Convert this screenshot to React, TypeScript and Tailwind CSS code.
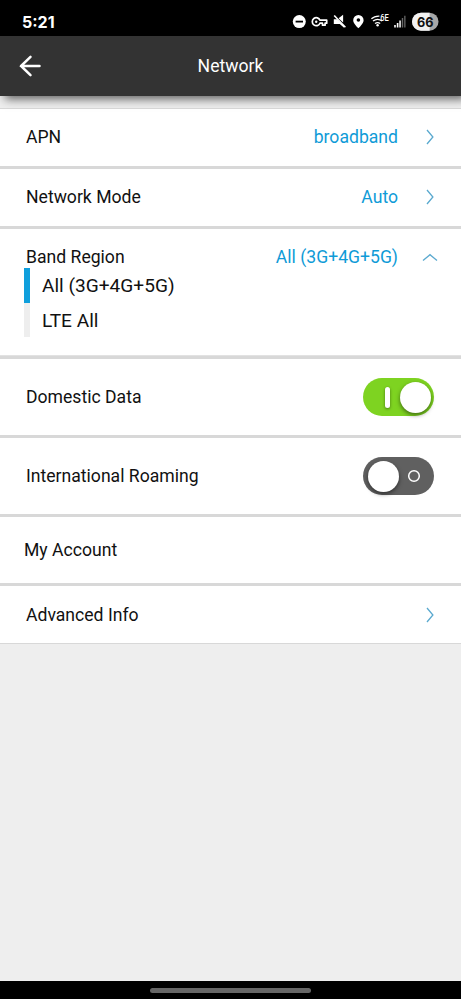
import type { ReactNode } from "react";

function Chevron({ up = false }: { up?: boolean }) {
  return (
    <svg width="16" height="16" viewBox="0 0 16 16" fill="none" stroke="#5aa9cf" strokeWidth="1.3" className="shrink-0">
      {up ? <path d="M1 11.5 8 5.7l7 5.8" /> : <path d="M5 1 10.9 8 5 15" />}
    </svg>
  );
}

function Row({ label, value, className, children }: { label: string; value?: string; className: string; children?: ReactNode }) {
  return (
    <div className={"flex items-center bg-white pl-[26px] " + className}>
      <span className="flex-1">{label}</span>
      {value && <span className="mr-6 text-[#0f9bd7]">{value}</span>}
      {children}
    </div>
  );
}

function Separator() {
  return <div className="h-[3px] shrink-0 bg-[#d8d8d8]" />;
}

function Toggle({ on }: { on: boolean }) {
  return on ? (
    <div className="flex h-[38px] w-[71px] items-center justify-end rounded-full bg-[#7ed321] pr-[3px]">
      <div className="mr-[10px] h-[21px] w-[5px] rounded-full bg-white shadow-[0_1px_3px_rgba(0,0,0,0.45)]" />
      <div className="size-[31px] rounded-full bg-white shadow-[0_2px_4px_rgba(0,0,0,0.5)]" />
    </div>
  ) : (
    <div className="flex h-[38px] w-[71px] items-center rounded-full bg-[#606060] pl-[5px]">
      <div className="size-[31px] rounded-full bg-white shadow-[0_2px_4px_rgba(0,0,0,0.5)]" />
      <svg width="14" height="14" viewBox="0 0 14 14" fill="none" stroke="#fff" strokeWidth="1.5" className="ml-[8px]">
        <circle cx="7" cy="7" r="5.3" />
      </svg>
    </div>
  );
}

function StatusIcons() {
  return (
    <svg width="154" height="24" viewBox="290 10 154 24" fill="#fff">
      <circle cx="299.3" cy="21.6" r="6.5" />
      <path d="M295.6 20.7h7.4v1.8h-7.4z" fill="#000" />
      <path d="M320 20.2h6.7v3h-1.6v2h-2.6v-2h-2.5a4 4 0 1 1 0-3z" fill="none" stroke="#fff" strokeWidth="1.7" strokeLinejoin="round" />
      <circle cx="316.2" cy="21.7" r="1.2" />
      <path d="M333.8 19.3h3.2l7 6.6v1.9l-4.2-3.9h-6z" />
      <path d="M338.6 18.3l4.5-3.6v7.8z" />
      <path d="M334.2 15.5l11.2 11.8" stroke="#fff" strokeWidth="1.6" />
      <path d="M358.4 15a5.2 5.2 0 0 0-5.2 5.2c0 3.6 5.2 8 5.2 8s5.2-4.4 5.2-8a5.2 5.2 0 0 0-5.2-5.2z" />
      <circle cx="358.4" cy="20" r="1.8" fill="#000" />
      <g fill="none" stroke="#fff" strokeWidth="1.3">
        <path d="M371.4 18.8q3-2.9 8-2.7" />
        <path d="M373 21.1q4.6-3.6 9.2 0" />
        <path d="M375 23.5q2.7-1.9 5.2 0" />
      </g>
      <circle cx="377.6" cy="25.2" r="1.2" />
      <text x="380.2" y="20.8" fontFamily="Roboto, sans-serif" fontWeight="500" fontSize="8.5" textLength="8.5" lengthAdjust="spacingAndGlyphs">6E</text>
      <path d="M394.2 25h1.6v2.5h-1.6zM396.8 23h1.6v4.5h-1.6zM399.3 20.5h1.5v7h-1.5z" />
      <path d="M401.8 18h1.4v9.5h-1.4zM404.2 15.7h1.3v11.8h-1.3z" fill="#666" />
      <rect x="412" y="12.7" width="26.5" height="18" rx="9" fill="#a7a7a7" />
      <path d="M421 12.7h8.6v18H421a9 9 0 0 1 0-18z" fill="#f2f2f2" />
      <text x="425.2" y="26.6" textAnchor="middle" fill="#111" fontFamily="Inter, sans-serif" fontWeight="700" fontSize="13.5" textLength="16.5" lengthAdjust="spacingAndGlyphs">66</text>
    </svg>
  );
}

export default function App() {
  return (
    <div className="flex h-[999px] w-[461px] flex-col overflow-hidden bg-[#eeeeee] font-['Roboto',sans-serif] text-[17.6px] leading-[22px] text-[#111]">
      <div className="flex h-9 shrink-0 items-center justify-between bg-black pt-[8px] pr-[17px] pl-[22px]">
        <span className="pb-px font-['Inter',sans-serif] text-[16px] font-bold text-white">5:21</span>
        <StatusIcons />
      </div>
      <header className="z-10 grid h-[60px] shrink-0 grid-cols-[1fr_auto_1fr] items-center bg-[#333333] pl-[18px] text-white shadow-[5px_3px_9px_rgba(0,0,0,0.6)]">
        <svg width="24" height="24" viewBox="0 0 24 24" fill="none" stroke="#fff" strokeWidth="2.5" strokeLinecap="round">
          <path d="M12.5 2.8 3 12l9.500 9.200M3 12h18.500" />
        </svg>
        <h1 className="pr-[18px]">Network</h1>
      </header>
      <div className="h-3 shrink-0" />
      <main className="flex shrink-0 flex-col border-y border-[#d8d8d8]">
        <Row label="APN" value="broadband" className="h-[57px] pr-[23px] pb-px"><Chevron /></Row>
        <Separator />
        <Row label="Network Mode" value="Auto" className="h-[57px] pr-[23px] pb-px"><Chevron /></Row>
        <Separator />
        <section className="h-[126px] bg-white">
          <Row label="Band Region" value="All (3G+4G+5G)" className="h-[39px] pt-[17px] pr-[23px]"><Chevron up /></Row>
          <ul className="ml-6 text-[19.1px]">
            <li className="flex h-[35px] items-center border-l-[6px] border-[#0f9fdc] pl-3">All (3G+4G+5G)</li>
            <li className="flex h-[34px] items-center border-l-[6px] border-[#eeeeee] pt-px pl-3">LTE All</li>
          </ul>
        </section>
        <div className="h-1 shrink-0 border-t border-[#e2e2e2] bg-[#d8d8d8]" />
        <Row label="Domestic Data" className="h-[76px] pr-[27px]"><Toggle on /></Row>
        <Separator />
        <Row label="International Roaming" className="h-[76px] pr-[27px]"><Toggle on={false} /></Row>
        <Separator />
        <div className="flex h-[66px] items-center bg-white pl-6">My Account</div>
        <Separator />
        <Row label="Advanced Info" className="h-[57px] pr-[23px]"><Chevron /></Row>
      </main>
      <div className="flex-1" />
      <footer className="flex h-[18px] shrink-0 items-center justify-center bg-black">
        <div className="h-[5px] w-[161px] rounded-full bg-[#666]" />
      </footer>
    </div>
  );
}
